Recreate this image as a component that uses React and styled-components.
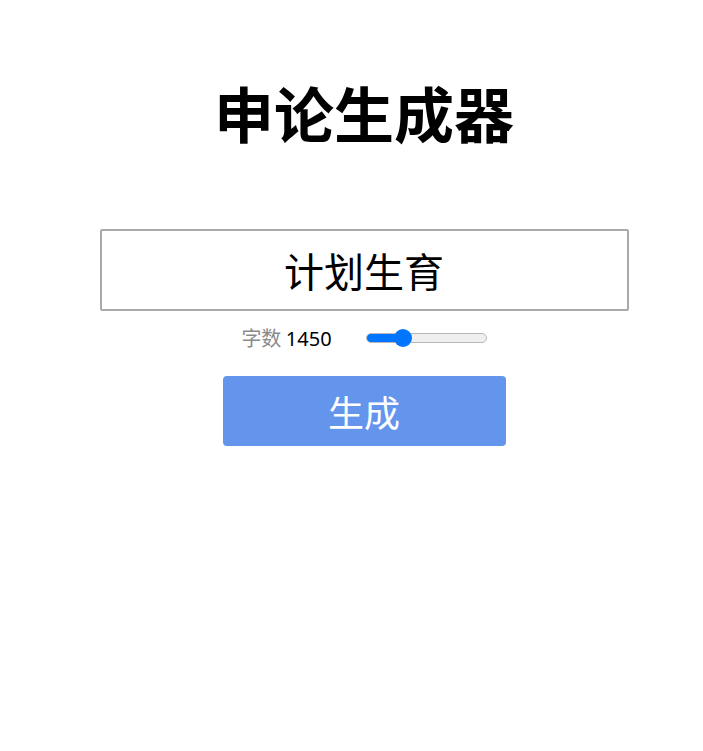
import React, { useState } from 'react';
import styled, { createGlobalStyle } from 'styled-components';

const GlobalStyle = createGlobalStyle`
  body {
    margin: 0;
    background: #ffffff;
    font-family: "Noto Sans CJK SC", "Noto Sans", sans-serif;
  }
`;

const Page = styled.div`
  display: flex;
  flex-direction: column;
  align-items: center;
  padding-left: 25px;
`;

const Title = styled.h1`
  margin: 82px 0 0;
  font-size: 60px;
  line-height: 60px;
  font-weight: 700;
  color: #000;
`;

const TopicInput = styled.input`
  box-sizing: border-box;
  margin-top: 87px;
  width: 529px;
  height: 82px;
  border: 2px solid #a9a9a9;
  border-radius: 2px;
  font-family: inherit;
  font-size: 40px;
  text-align: center;
  color: #000;
  outline: none;
`;

const Row = styled.div`
  display: flex;
  align-items: center;
  gap: 34px;
  margin-top: 17px;
  height: 20px;
`;

const Label = styled.span`
  font-size: 20px;
  line-height: 20px;
  color: #8a8a8a;
`;

const Count = styled.span`
  font-family: "Noto Sans", "Noto Sans CJK SC", sans-serif;
  font-size: 20px;
  color: #000;
`;

const Slider = styled.input`
  -webkit-appearance: none;
  appearance: none;
  margin: 0;
  width: 121px;
  height: 10px;
  border: 1px solid #b7b7b7;
  border-radius: 5px;
  box-sizing: border-box;
  outline: none;

  &::-webkit-slider-thumb {
    -webkit-appearance: none;
    width: 18px;
    height: 18px;
    border-radius: 50%;
    background: #0075ff;
    border: none;
    cursor: pointer;
  }
`;

const Button = styled.button`
  margin-top: 28px;
  width: 283px;
  height: 70px;
  border: none;
  border-radius: 4px;
  background: #6495ed;
  color: #ffffff;
  font-family: inherit;
  font-size: 36px;
  cursor: pointer;
`;

const MIN = 100;
const MAX = 5000;

const App = () => {
  const [topic, setTopic] = useState('计划生育');
  const [words, setWords] = useState(1450);

  const frac = (words - MIN) / (MAX - MIN);
  const fill = ((9 + frac * 103) / 121) * 100;

  return (
    <>
      <GlobalStyle />
      <Page>
        <Title>申论生成器</Title>
        <TopicInput value={topic} onChange={e => setTopic(e.target.value)} />
        <Row>
          <Label>
            字数 <Count>{words}</Count>
          </Label>
          <Slider
            type="range"
            min={MIN}
            max={MAX}
            step={50}
            value={words}
            onChange={e => setWords(Number(e.target.value))}
            style={{
              background: `linear-gradient(to right, #0075ff ${fill}%, #efefef ${fill}%)`,
            }}
          />
        </Row>
        <Button>生成</Button>
      </Page>
    </>
  );
};

export default App;
